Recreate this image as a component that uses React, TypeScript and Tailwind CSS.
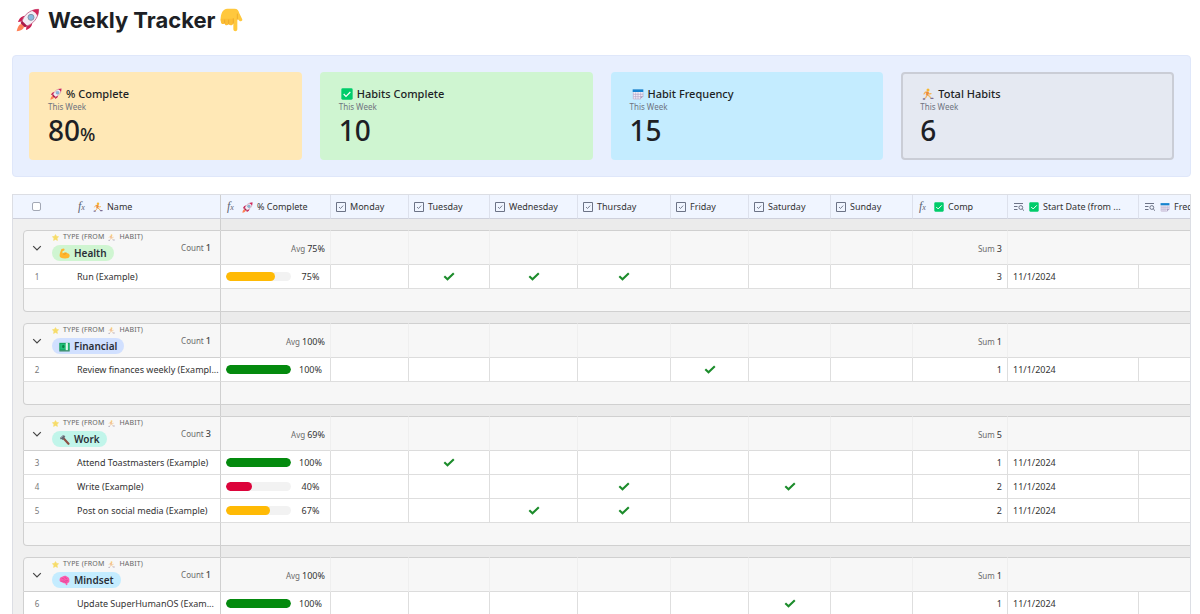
import type { ReactNode } from "react";

type IconProps = { className?: string };

function Rocket({ className = "size-3" }: IconProps) {
  return (
    <svg viewBox="0 0 36 36" className={`shrink-0 ${className}`} aria-hidden="true">
      <path d="M9 24c-5 0-6.500 5-8 11 6-1 11-3 11-8z" fill="#ff8257" />
      <path d="M15 12C9 11 5 15 3 21l8-1zM24 21c1 6-3 10-9 12l1-8z" fill="#ca1f52" />
      <path
        d="M34 2C24 2 16 7 11 15l-3 7 6 6 7-3C29 20 34 12 34 2z"
        fill="#f2edf4"
        stroke="#c35e85"
        strokeWidth="1.300"
      />
      <path d="M34 2c-4 0-7 .7-10 2 4 1.500 6.500 4 8 8 1.300-3 2-6 2-10z" fill="#d3265a" />
      <path d="M9 19l8 8-4 2-6-6z" fill="#a81948" />
      <circle cx="22.500" cy="14" r="4.500" fill="#86bbdf" stroke="#8493a8" strokeWidth="1.500" />
    </svg>
  );
}

function HandDown({ className = "size-6" }: IconProps) {
  return (
    <svg viewBox="0 0 36 36" className={`shrink-0 ${className}`} aria-hidden="true">
      <path
        d="M11 1h11c4 0 6 3 7 7l4 8c2 3-2 5-4 3l-3-3v16c0 4-6 4-6 0V22H5c-3 0-4-2-4-5C1 9 4 1 11 1z"
        fill="#ffc83d"
      />
      <path
        d="M1 16c0 6 1 8 3 8s3-1 3-2c0 3 1 4 3 4s3-1 3-3c0 2 1 3 3 3s4-1 4-4v-6z"
        fill="#fcbd34"
      />
      <path
        d="M7 18v5M13 18v6M20 16v7M26 9v8"
        fill="none"
        stroke="#e8a62a"
        strokeWidth="1.200"
        strokeLinecap="round"
      />
    </svg>
  );
}

function CheckMark({ className = "size-3" }: IconProps) {
  return (
    <svg viewBox="0 0 36 36" className={`shrink-0 ${className}`} aria-hidden="true">
      <rect x="1" y="1" width="34" height="34" rx="4" fill="#00cc6a" />
      <path d="M8 18l7 7L28 12" fill="none" stroke="#fff" strokeWidth="3.500" />
    </svg>
  );
}

function Calendar({ className = "size-3" }: IconProps) {
  return (
    <svg viewBox="0 0 36 36" className={`shrink-0 ${className}`} aria-hidden="true">
      <path d="M3 5h30v22l-6 7H3z" fill="#f1eff8" />
      <path d="M2 4h32v8H2z" fill="#1683cf" />
      <path d="M34 25l-9 9v-9z" fill="#a79cc0" />
      <path
        d="M4 13v20h22M33 13v13M4 19h29M4 26h29M11 13v20M18 13v20M26 13v12"
        fill="none"
        stroke="#b3a6c8"
        strokeWidth="2"
      />
    </svg>
  );
}

function Runner({ className = "size-3" }: IconProps) {
  return (
    <svg viewBox="0 0 36 36" className={`shrink-0 ${className}`} aria-hidden="true">
      <circle cx="18" cy="6" r="4.500" fill="#f7b62f" />
      <path
        d="M6 18l4-6 7 1 5 5 5-1"
        fill="none"
        stroke="#f5b04a"
        strokeWidth="3.500"
        strokeLinecap="round"
        strokeLinejoin="round"
      />
      <path d="M13 12h6l-1 10h-5z" fill="#ef8b39" stroke="#ef8b39" strokeWidth="2" />
      <path
        d="M14 23l-2 5-5 4M17 22l6 3 3 6"
        fill="none"
        stroke="#f0b35c"
        strokeWidth="3.500"
        strokeLinejoin="round"
      />
      <path d="M4 33h4M27 31h6" stroke="#7a6f96" strokeWidth="4" strokeLinecap="round" />
    </svg>
  );
}

function Star({ className = "size-2" }: IconProps) {
  return (
    <svg viewBox="0 0 36 36" className={`shrink-0 ${className}`} aria-hidden="true">
      <path
        d="M18 3l5 9 11 2-8 8 2 11-10-5-10 5 2-11-8-8 11-2z"
        fill="#f7dc6a"
        stroke="#f7dc6a"
        strokeWidth="3"
        strokeLinejoin="round"
      />
    </svg>
  );
}

function Muscle() {
  return (
    <svg viewBox="0 0 36 36" className="size-[11px] shrink-0" aria-hidden="true">
      <path
        d="M8 3l8-1c3 1 3 6 0 7l-4 1c-1 4-1 6 1 8 3-4 9-5 12-2 5 0 10 3 10 9 0 7-7 9-15 9C9 34 2 31 2 25 2 18 5 10 8 3z"
        fill="#ffb62e"
      />
      <path
        d="M13 18c2 2 4 3 8 2M25 16c-3 0-4 1-5 3"
        fill="none"
        stroke="#e4901b"
        strokeWidth="2"
      />
    </svg>
  );
}

function Money() {
  return (
    <svg viewBox="0 0 36 36" className="size-[11px] shrink-0" aria-hidden="true">
      <path d="M1 6h34v25H1z" fill="#0f9d58" />
      <path d="M4 9h28v19H4z" fill="#22c07a" />
      <path d="M22 6h7v25h-7z" fill="#e2f7ea" />
      <ellipse cx="14" cy="18" rx="4" ry="6" fill="#0a8246" />
      <path d="M1 31h34v3H1z" fill="#0a6f3d" />
    </svg>
  );
}

function Hammer() {
  return (
    <svg viewBox="0 0 36 36" className="size-[11px] shrink-0" aria-hidden="true">
      <path d="M14 13l17 19" stroke="#8d5145" strokeWidth="7" strokeLinecap="round" />
      <path d="M3 13L14 3l7 4-3 3v4l-6 6-3-4-3 2z" fill="#5f6670" />
      <path d="M3 13L14 3l3 1L6 15z" fill="#9aa3ad" />
    </svg>
  );
}

function Brain() {
  return (
    <svg viewBox="0 0 36 36" className="size-[11px] shrink-0" aria-hidden="true">
      <path
        d="M12 5c5-4 12-3 15 1 5 2 8 7 7 12 1 5-2 8-6 8l-1 7c-4 1-6-2-6-6-5 1-9 0-11-3-6 0-9-4-8-9 0-5 4-9 10-10z"
        fill="#fb5cae"
      />
      <path
        d="M9 12c4-2 7 0 8 3M20 6c-1 4 2 6 6 5M7 20c5 1 8-1 12 1 4-5 8-4 11-1M20 27c0-4 3-5 7-4"
        fill="none"
        stroke="#d33a8d"
        strokeWidth="2"
      />
    </svg>
  );
}

function FormulaIcon() {
  return (
    <span
      className="flex w-3 shrink-0 items-baseline pl-px font-['Liberation_Serif',serif] text-[12px] leading-3 text-[#5d6373] italic"
      aria-hidden="true"
    >
      f<span className="text-[8px]">x</span>
    </span>
  );
}

function CheckboxIcon() {
  return (
    <svg
      viewBox="0 0 10 10"
      className="size-[10px] shrink-0"
      fill="none"
      stroke="#6c7386"
      aria-hidden="true"
    >
      <path d="M.5.5h9v9h-9z" />
      <path d="M3 5l1.500 1.500L7.200 3.600" strokeWidth="0.900" />
    </svg>
  );
}

function LookupIcon() {
  return (
    <svg
      viewBox="0 0 12 10"
      className="h-[10px] w-3 shrink-0"
      fill="none"
      stroke="#6c7386"
      aria-hidden="true"
    >
      <path d="M1 1.500h9M1 4.500h3.500M1 7.500h3.500" />
      <circle cx="7.800" cy="5.500" r="1.900" />
      <path d="M9.200 6.900L11 8.700" />
    </svg>
  );
}

function Tick() {
  return (
    <svg
      viewBox="0 0 12 10"
      className="mx-auto h-[10px] w-3"
      fill="none"
      stroke="#1c8c2b"
      strokeWidth="2.100"
      role="img"
      aria-label="Done"
    >
      <path d="M1.300 4.300l3.200 3L10.800 1.300" />
    </svg>
  );
}

const stats = [
  { label: "% Complete", value: "80", unit: "%", icon: <Rocket />, box: "border-[#ffe8b6] bg-[#ffe8b6]" },
  { label: "Habits Complete", value: "10", icon: <CheckMark />, box: "border-[#cff5d1] bg-[#cff5d1]" },
  { label: "Habit Frequency", value: "15", icon: <Calendar />, box: "border-[#c4ecff] bg-[#c4ecff]" },
  { label: "Total Habits", value: "6", icon: <Runner />, box: "border-[#cacdd6] bg-[#e5e9f2]" },
];

const days = ["Monday", "Tuesday", "Wednesday", "Thursday", "Friday", "Saturday", "Sunday"];

type Habit = { id: number; name: string; percent: number; done: string[]; comp: number };

type Group = {
  name: string;
  icon: ReactNode;
  pill: string;
  avg: number;
  sum: number;
  habits: Habit[];
};

const groups: Group[] = [
  {
    name: "Health",
    icon: <Muscle />,
    pill: "bg-[#cff5d1]",
    avg: 75,
    sum: 3,
    habits: [
      { id: 1, name: "Run (Example)", percent: 75, done: ["Tuesday", "Wednesday", "Thursday"], comp: 3 },
    ],
  },
  {
    name: "Financial",
    icon: <Money />,
    pill: "bg-[#d1e0ff]",
    avg: 100,
    sum: 1,
    habits: [
      { id: 2, name: "Review finances weekly (Exampl...", percent: 100, done: ["Friday"], comp: 1 },
    ],
  },
  {
    name: "Work",
    icon: <Hammer />,
    pill: "bg-[#c1f5ea]",
    avg: 69,
    sum: 5,
    habits: [
      { id: 3, name: "Attend Toastmasters (Example)", percent: 100, done: ["Tuesday"], comp: 1 },
      { id: 4, name: "Write (Example)", percent: 40, done: ["Thursday", "Saturday"], comp: 2 },
      { id: 5, name: "Post on social media (Example)", percent: 67, done: ["Wednesday", "Thursday"], comp: 2 },
    ],
  },
  {
    name: "Mindset",
    icon: <Brain />,
    pill: "bg-[#c4ecff]",
    avg: 100,
    sum: 1,
    habits: [
      { id: 6, name: "Update SuperHumanOS (Exam...", percent: 100, done: ["Saturday"], comp: 1 },
    ],
  },
];

function barColor(percent: number) {
  if (percent >= 100) return "bg-[#048a0e]";
  if (percent >= 50) return "bg-[#ffba05]";
  return "bg-[#dc043b]";
}

function HeadCell({ icon, children }: { icon: ReactNode; children: ReactNode }) {
  return (
    <th scope="col" className="border-r border-b border-r-[#dde1ec] border-b-[#ced0db] px-[5px] pt-px font-normal">
      <div className="flex items-center gap-1 whitespace-nowrap">
        {icon}
        {children}
      </div>
    </th>
  );
}

function Spacer() {
  return (
    <tr className="h-[11px]">
      <td colSpan={3} className="border-r border-[#cfcfcf]" />
      <td colSpan={11} className="bg-[#ebebeb]" />
    </tr>
  );
}

function GroupRows({ group }: { group: Group }) {
  const cell = "border-t border-r border-b border-t-[#d0d0d0] border-r-[#efefef] border-b-[#dcdcdc] bg-[#f7f7f7]";
  return (
    <>
      <Spacer />
      <tr className="h-[35px]">
        <td />
        <td
          colSpan={2}
          className="rounded-tl border-t border-r border-b border-l border-[#d0d0d0] bg-[#f7f7f7]"
        >
          <div className="flex items-center pr-[9px] pl-2">
            <button type="button" aria-label={`Collapse ${group.name}`} className="w-[20px] shrink-0">
              <svg viewBox="0 0 10 10" className="size-[10px]" fill="none" stroke="#454545">
                <path d="M1.200 3.200L5 7l3.800-3.800" strokeWidth="1.200" />
              </svg>
            </button>
            <div className="flex-1 pb-[3px]">
              <div className="flex items-center gap-1 text-[7px] leading-3 tracking-wide text-[#666] uppercase">
                <Star className="size-[7px]" />
                <span>Type (from</span>
                <Runner className="size-[7px] opacity-60" />
                <span>Habit)</span>
              </div>
              <span
                className={`mt-[2px] flex h-4 w-fit items-center gap-1 rounded-full px-[7px] text-[10px] font-semibold text-[#2b2f38] ${group.pill}`}
              >
                {group.icon}
                {group.name}
              </span>
            </div>
            <span className="text-[8px] text-[#6b6b6b]">
              Count <b className="text-[9px] font-medium text-[#444]">{group.habits.length}</b>
            </span>
          </div>
        </td>
        <td className={`${cell} pt-[2px] pr-[5px] text-right text-[8px] text-[#6b6b6b]`}>
          Avg <span className="text-[9px] text-[#333]">{group.avg}%</span>
        </td>
        {days.map((day) => (
          <td key={day} className={cell} />
        ))}
        <td className={`${cell} pt-[2px] pr-[5px] text-right text-[8px] text-[#6b6b6b]`}>
          Sum <span className="text-[9px] text-[#333]">{group.sum}</span>
        </td>
        <td colSpan={2} className={cell} />
      </tr>
      {group.habits.map((habit) => (
        <tr key={habit.id} className="h-6">
          <td />
          <td className="border-b border-l border-b-[#dedede] border-l-[#d0d0d0] bg-white text-center text-[8px] text-[#777]">
            {habit.id}
          </td>
          <td className="border-r border-b border-r-[#cfcfcf] border-b-[#dedede] bg-white pl-[27px] whitespace-nowrap">
            {habit.name}
          </td>
          <td className="border-r border-b border-[#dedede] bg-white pl-[5px]">
            <div className="flex items-center">
              <div className="h-[9px] w-[65px] overflow-hidden rounded-full bg-[#f2f2f2]">
                <div
                  className={`h-full rounded-full ${barColor(habit.percent)}`}
                  style={{ width: `${habit.percent}%` }}
                />
              </div>
              <span className="flex-1 text-center">{habit.percent}%</span>
            </div>
          </td>
          {days.map((day) => (
            <td key={day} className="border-r border-b border-[#dedede] bg-white">
              {habit.done.includes(day) && <Tick />}
            </td>
          ))}
          <td className="border-r border-b border-[#dedede] bg-white pr-[5px] text-right">{habit.comp}</td>
          <td className="border-r border-b border-[#dedede] bg-white pl-[5px]">11/1/2024</td>
          <td className="border-b border-[#dedede] bg-white" />
        </tr>
      ))}
      <tr className="h-[23px]">
        <td />
        <td colSpan={2} className="rounded-bl border-r border-b border-l border-[#d0d0d0] bg-[#f7f7f7]" />
        <td colSpan={11} className="border-b border-[#d0d0d0] bg-[#f7f7f7]" />
      </tr>
    </>
  );
}

export default function App() {
  return (
    <main className="flex h-screen flex-col bg-white pr-[9px] pl-3 font-['Noto_Sans',sans-serif] text-[#333]">
      <h1 className="flex h-10 shrink-0 items-center gap-2 pl-1 font-['Inter',sans-serif] text-[22px] font-bold text-[#1d1f25]">
        <Rocket className="size-6" />
        <span className="flex items-center gap-1">
          Weekly Tracker
          <HandDown />
        </span>
      </h1>

      <section className="mt-[15px] grid shrink-0 grid-cols-4 gap-[18px] rounded border border-[#dfe7fa] bg-[#e8effe] p-4">
        {stats.map((stat) => (
          <div key={stat.label} className={`h-[88px] rounded border-2 px-[17px] pt-3 ${stat.box}`}>
            <h2 className="flex items-center gap-1 pl-[2px] text-[11px] leading-4 font-medium text-[#1d1f25]">
              {stat.icon}
              {stat.label}
            </h2>
            <p className="text-[8px] leading-[10px] text-[#6f747f]">This Week</p>
            <p className="text-[28px] leading-9 font-medium text-[#1d1f25]">
              {stat.value}
              {stat.unit && <span className="text-[18px]">{stat.unit}</span>}
            </p>
          </div>
        ))}
      </section>

      <div className="mt-[17px] min-h-0 flex-1 overflow-auto border-x border-t border-[#dcdee4] bg-[#f0f0f0] [scrollbar-width:none]">
        <table className="w-[1236px] table-fixed border-separate border-spacing-0 text-left text-[9px] leading-3">
          <colgroup>
            <col className="w-[10px]" />
            <col className="w-[27px]" />
            <col className="w-[171px]" />
            <col className="w-[110px]" />
            <col className="w-[78px]" />
            <col className="w-[81px]" />
            <col className="w-[88px]" />
            <col className="w-[93px]" />
            <col className="w-[78px]" />
            <col className="w-[82px]" />
            <col className="w-[82px]" />
            <col className="w-[95px]" />
            <col className="w-[131px]" />
            <col className="w-[110px]" />
          </colgroup>
          <thead className="bg-[#f0f5ff]">
            <tr className="h-6">
              <td className="border-b border-[#ced0db]" />
              <td className="border-b border-[#ced0db]">
                <input
                  type="checkbox"
                  aria-label="Select all habits"
                  className="mx-auto block size-[9px] appearance-none rounded-[2px] border border-[#a3a8b5] bg-white"
                />
              </td>
              <th scope="col" className="border-r border-b border-r-[#cfcfcf] border-b-[#ced0db] pt-px pl-[27px] font-normal">
                <div className="flex items-center gap-1">
                  <FormulaIcon />
                  <Runner className="size-[10px]" />
                  Name
                </div>
              </th>
              <HeadCell icon={<FormulaIcon />}>
                <Rocket className="size-[11px]" />% Complete
              </HeadCell>
              {days.map((day) => (
                <HeadCell key={day} icon={<CheckboxIcon />}>
                  {day}
                </HeadCell>
              ))}
              <HeadCell icon={<FormulaIcon />}>
                <CheckMark className="size-[10px]" />
                Comp
              </HeadCell>
              <HeadCell icon={<LookupIcon />}>
                <CheckMark className="size-[10px]" />
                Start Date (from ...
              </HeadCell>
              <HeadCell icon={<LookupIcon />}>
                <Calendar className="size-[10px]" />
                Frequency
              </HeadCell>
            </tr>
          </thead>
          <tbody>
            {groups.map((group) => (
              <GroupRows key={group.name} group={group} />
            ))}
          </tbody>
        </table>
      </div>
    </main>
  );
}
